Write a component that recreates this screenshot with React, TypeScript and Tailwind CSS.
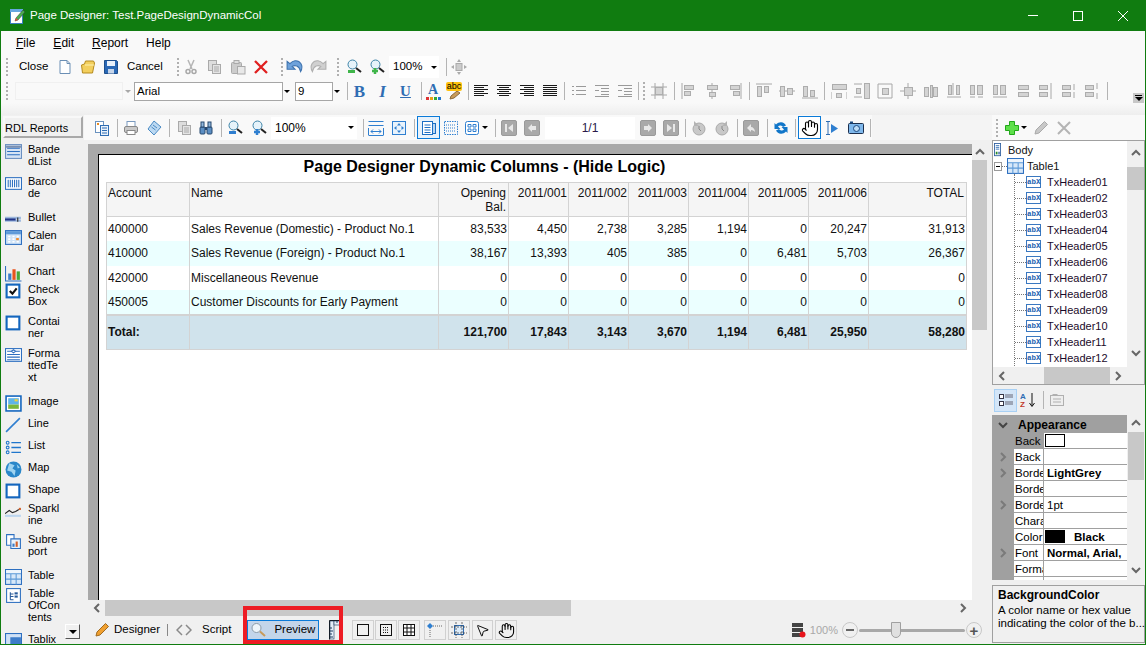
import React from "react";
import { Hand, MousePointer2 } from "lucide-react";

type P = { children?: React.ReactNode; s?: number };
const Ic = ({ children, s = 16 }: P) => (
  <svg width={s} height={s} viewBox="0 0 16 16" className="shrink-0" fill="none">{children}</svg>
);

const Btn = ({ children, w = "w-[23px]", c = "" }: { children?: React.ReactNode; w?: string; c?: string }) => (
  <div className={`${w} h-full shrink-0 flex items-center justify-center ${c}`}>{children}</div>
);
const Sep = ({ c = "" }: { c?: string }) => <div className={`w-px h-[18px] shrink-0 bg-[#b4b4b4] ${c}`} />;
const Grip = ({ c = "" }: { c?: string }) => (
  <div className={`w-[2px] shrink-0 flex flex-col gap-[2px] ${c}`}>
    {[0, 1, 2, 3, 4].map((i) => <div key={i} className="w-[2px] h-[2px] bg-[#b0b0b0]" />)}
  </div>
);
const Arrow = ({ c = "", gray = false }: { c?: string; gray?: boolean }) => (
  <div className={`w-0 h-0 shrink-0 border-x-[3px] border-x-transparent border-t-[3px] ${gray ? "border-t-[#a8a8a8]" : "border-t-black"} ${c}`} />
);

/* grey layout glyphs */
const Gr = ({ r, l = [] }: { r: number[][]; l?: number[][] }) => (
  <Ic>
    {l.map((a, i) => <line key={i} x1={a[0]} y1={a[1]} x2={a[2]} y2={a[3]} stroke="#a8a8a8" />)}
    {r.map((a, i) => <rect key={i} x={a[0] + 0.5} y={a[1] + 0.5} width={a[2]} height={a[3]} fill="#d4d4d4" stroke="#adadad" />)}
  </Ic>
);

const Lines = ({ k }: { k: number[][] }) => (
  <Ic>{k.map((a, i) => <line key={i} x1={a[0]} x2={a[1]} y1={a[2] + 0.5} y2={a[2] + 0.5} stroke={a[3] ? "#9a9a9a" : "#1a1a1a"} />)}</Ic>
);

const Mag = ({ acc, plus }: { acc: string; plus?: boolean }) => (
  <Ic>
    <circle cx="6.5" cy="5.5" r="4.5" fill="#e6f3fa" stroke="#3d83a8" />
    <path d="M10 9l5 4" stroke="#222" strokeWidth="2" />
    {plus ? <path d="M6 9v6M3 12h6" stroke={acc} strokeWidth="2.5" /> : <rect x="2" y="11" width="7" height="3" fill={acc} />}
  </Ic>
);
const Doc = () => (
  <Ic><path d="M3 1.5h7l3 3v10H3z" fill="#fff" stroke="#6b8fb5" /><path d="M10 1.5v3h3" stroke="#6b8fb5" /></Ic>
);
const Folder = () => (
  <Ic><path d="M1.5 6l3-1 1-3h8l1 2-2 10H2.500z" fill="#f3cf5d" stroke="#b58a1e" /><path d="M5 6h9" stroke="#fff2b0" /></Ic>
);
const Save = () => (
  <Ic><path d="M1.500 1.500h12l1 1v12h-13z" fill="#2a68b5" stroke="#1e4f8c" /><rect x="4" y="2" width="8" height="5" fill="#e9f1fa" /><rect x="5" y="10" width="6" height="4.500" fill="#c7d6ea" /></Ic>
);
const Scissors = () => (
  <Ic><path d="M5 1l4 9M11 1l-4 9" stroke="#b5b5b5" strokeWidth="1.500" /><circle cx="5" cy="12.500" r="2" stroke="#a8a8a8" strokeWidth="1.500" /><circle cx="11" cy="12.500" r="2" stroke="#a8a8a8" strokeWidth="1.500" /></Ic>
);
const CopyG = () => (
  <Ic><rect x="2.500" y="1.500" width="8" height="10" fill="#ddd" stroke="#aaa" /><rect x="6.500" y="5.500" width="8" height="9" fill="#e4e4e4" stroke="#aaa" /><path d="M8 8h5M8 10h5M8 12h5" stroke="#aaa" /></Ic>
);
const PasteG = () => (
  <Ic><rect x="1.500" y="3.500" width="10" height="11" rx="1" fill="#ccc" stroke="#aaa" /><rect x="4" y="1.500" width="5" height="3" fill="#ddd" stroke="#aaa" /><rect x="7.500" y="7.500" width="7.500" height="7.500" fill="#e8e8e8" stroke="#aaa" /></Ic>
);
const RedX = () => (
  <Ic><path d="M2 2l12 12M14 2L2 14" stroke="#e02020" strokeWidth="2.300" /></Ic>
);
const Undo = () => (
  <Ic s={18}><path d="M1 3v7h7L5.500 7.500C8 6 11.500 6.500 13 12 16 7 12.500 2 8 2.500 6.500 2.700 5 3.500 3.500 5z" fill="#6ea2db" stroke="#3f74b0" /></Ic>
);
const Redo = () => (
  <Ic s={18}><path d="M15 3v7H8l2.500-2.500C8 6 4.500 6.500 3 12 0 7 3.500 2 8 2.500c1.500.2 3 1 4.500 2.500z" fill="#d0d0d0" stroke="#b0b0b0" /></Ic>
);
const MoveG = () => (
  <Ic><rect x="5" y="4.500" width="6" height="7" fill="#ccc" stroke="#aaa" /><path d="M8 0l2 3H6zM8 16l2-3H6zM0 8l3-2v4zM16 8l-3-2v4z" fill="#aaa" /></Ic>
);
const PrintI = () => (
  <Ic><rect x="4" y="1.500" width="8" height="5" fill="#fff" stroke="#7a9abf" /><rect x="1.500" y="6.500" width="13" height="6" rx="1.500" fill="#c9c9c9" stroke="#888" /><rect x="4" y="10.500" width="8" height="4" fill="#fff" stroke="#888" /></Ic>
);
const Scroll = () => (
  <Ic><path d="M7 1l7 6-7 8-6-6z" fill="#bcd9f2" stroke="#4a8ac4" /><path d="M6 5l4 3M4.500 7l4 3" stroke="#4a8ac4" /></Ic>
);
const DocsI = () => (
  <Ic><rect x="1.500" y="1.500" width="8" height="11" fill="#fff" stroke="#6a92bf" /><rect x="6.500" y="5.500" width="8" height="10" fill="#eaf2fb" stroke="#2f6db3" /><path d="M8 8h5M8 10.500h5M8 13h5" stroke="#2f6db3" /><rect x="3" y="3" width="2" height="2" fill="#e88a20" /></Ic>
);
const Bino = () => (
  <Ic><rect x="2" y="7" width="5" height="7" rx="1" fill="#5c8fc4" stroke="#27486e" /><rect x="9" y="7" width="5" height="7" rx="1" fill="#5c8fc4" stroke="#27486e" /><rect x="3" y="2" width="3" height="5" fill="#8fb6dc" stroke="#27486e" /><rect x="10" y="2" width="3" height="5" fill="#8fb6dc" stroke="#27486e" /><rect x="7" y="7" width="2" height="3" fill="#27486e" /></Ic>
);
const FitW = () => (
  <Ic><path d="M.5 1.500h15M.5 5.500h15M.5 8v7M15.500 8v7" stroke="#2f7fd0" /><path d="M3 11.500h10M3 11.500l2-2M3 11.500l2 2M13 11.500l-2-2M13 11.500l-2 2M.5 15.500h15" stroke="#2f7fd0" /></Ic>
);
const FitP = () => (
  <Ic><rect x="1.500" y="1.500" width="13" height="13" stroke="#2f7fd0" fill="#e9f3fc" /><path d="M8 3l2 2.500H6zM8 13l2-2.500H6zM3 8l2.500-2v4zM13 8l-2.500-2v4z" fill="#2f7fd0" /></Ic>
);
const PageI = () => (
  <Ic><rect x="1.500" y="1.500" width="10" height="13" fill="#fff" stroke="#1d6fc4" /><rect x="11.500" y="3.500" width="3" height="10" fill="#bcd8f2" stroke="#1d6fc4" /><path d="M3.500 5h6M3.500 7.500h6M3.500 10h6M3.500 12.500h6" stroke="#1d6fc4" /></Ic>
);
const PageD = () => (
  <Ic><rect x="1.500" y="1.500" width="13" height="13" strokeDasharray="1.500 1" stroke="#2f7fd0" /><path d="M3 5h10M3 8h10M3 11h10" stroke="#2f7fd0" strokeDasharray="1 1" /></Ic>
);
const Quad = () => (
  <Ic><rect x="1.500" y="1.500" width="13" height="13" rx="2" stroke="#2f7fd0" fill="#fff" /><path d="M4 4.500h3v2.500H4zM9 4.500h3v2.500H9zM4 9h3v2.500H4zM9 9h3v2.500H9z" stroke="#2f7fd0" /></Ic>
);
const Nav = ({ k }: { k: string }) => (
  <div className="w-[16px] h-[16px] rounded-[2px] bg-[#a9a9a9] border border-[#9a9a9a] flex items-center justify-center">
    <svg width="10" height="10" viewBox="0 0 10 10"><path d={k} fill="#e8e8e8" /></svg>
  </div>
);
const Clock = ({ m }: { m?: boolean }) => (
  <Ic><circle cx="8" cy="9" r="6" fill="#c8c8c8" stroke="#aaa" /><path d={m ? "M13 1v5h-5z" : "M3 1v5h5z"} fill="#b4b4b4" /><path d="M8 6v3l2 2" stroke="#888" /></Ic>
);
const Refresh = () => (
  <Ic><path d="M13 5.500A6 6 0 0 0 3 4.500L1.500 3v6h6L5 6.500a3 3 0 0 1 5 .5z" fill="#1176c9" /><path d="M3 10.500A6 6 0 0 0 13 11.500l1.500 1.500V7h-6L11 9.500a3 3 0 0 1-5-.5z" fill="#1176c9" /></Ic>
);
const SelText = () => (
  <Ic><path d="M2 1.500h4M2 14.500h4M4 1.500v13" stroke="#2f6db3" /><path d="M7 4l7 4.500L7 13z" fill="#2f7fd0" /></Ic>
);
const Camera = () => (
  <Ic><rect x=".5" y="3.500" width="15" height="10" rx="1" fill="#7fb8ec" stroke="#1c2f4d" /><circle cx="8.500" cy="8.500" r="3" fill="#bcdcf7" stroke="#1c4a80" /><rect x="2" y="1.500" width="3" height="2" fill="#1c4a80" /></Ic>
);
const Pencil = ({ c = "#c8c8c8", d = "#aaa" }: { c?: string; d?: string }) => (
  <Ic><path d="M11.500 1.500l3 3L6 13l-4 1 1-4z" fill={c} stroke={d} /></Ic>
);
const Plus = () => (
  <Ic s={16}><path d="M5.500 1.500h5v4h4v5h-4v4h-5v-4h-4v-5h4z" fill="#5ee04a" stroke="#22a81a" /></Ic>
);
const GrayX = () => (
  <Ic><path d="M2 2l12 12M14 2L2 14" stroke="#b4b4b4" strokeWidth="2" /></Ic>
);

const Chev = ({ d, c = "#666" }: { d: "u" | "d" | "l" | "r"; c?: string }) => {
  const p = { u: "M2 7l4-4 4 4", d: "M2 4l4 4 4-4", l: "M8 2L4 6l4 4", r: "M4 2l4 4-4 4" }[d];
  return <svg width="12" height="12" viewBox="0 0 12 12" className="shrink-0" fill="none"><path d={p} stroke={c} strokeWidth="2" /></svg>;
};

/* palette icons */
const PB = "#2d6fc0";
const pal: Record<string, React.ReactNode> = {
  bl: <Ic s={17}><rect x=".5" y="1.500" width="15" height="13" fill="#d5e3f4" stroke="#6a8fc0" /><path d="M2 5h12M2 8h12M2 11h12" stroke={PB} /><path d="M1 3.500h14" stroke="#7a8fb0" strokeWidth="2" /></Ic>,
  bc: <Ic s={17}><rect x=".5" y="2.500" width="15" height="11" fill="#fff" stroke={PB} /><path d="M3 4.500v7M5 4.500v7M7 4.500v7M9 4.500v7M11 4.500v7M13 4.500v7" stroke={PB} /></Ic>,
  bu: <Ic s={17}><path d="M0 6.500h15M0 9h15" stroke="#9db8dd" strokeWidth="2" /><path d="M0 8h10" stroke="#23368a" strokeWidth="2" /><path d="M12 6v4" stroke="#222" /></Ic>,
  ca: <Ic s={17}><rect x=".5" y="1.500" width="15" height="13" fill="#cfe3f7" stroke={PB} /><rect x="1" y="2" width="14" height="3" fill="#5e9ad8" /><path d="M3 7h2M7 7h2M11 7h2M3 9.500h2M7 9.500h2M3 12h2M7 12h2M11 12h2" stroke="#fff" strokeWidth="1.500" /><rect x="10.500" y="8.500" width="2.500" height="2" fill="#ef8b2c" /></Ic>,
  ch: <Ic s={17}><path d="M.5 1v14h15" stroke={PB} /><rect x="3" y="8" width="3" height="6" fill="#3c7cc8" /><rect x="7" y="4" width="3" height="10" fill="#e8541e" /><rect x="11" y="6" width="3" height="8" fill="#47a83c" /></Ic>,
  ck: <Ic s={17}><rect x="1.500" y="1.500" width="12" height="12" fill="#fff" stroke="#1466be" strokeWidth="2" /><path d="M4.500 7.500l2.500 2.500 4-5" stroke="#111" strokeWidth="2" /></Ic>,
  co: <Ic s={17}><rect x="1.500" y="1.500" width="12" height="12" fill="#fff" stroke="#1466be" strokeWidth="2" /></Ic>,
  ft: <Ic s={17}><rect x=".5" y="1.500" width="15" height="12" fill="#fff" stroke={PB} /><path d="M2 4h4M10 4h4M2 7h12M2 9.500h12M2 12h12" stroke={PB} /><path d="M6 4l2-1.500L10 4 8 5.500z" stroke={PB} /></Ic>,
  im: <Ic s={17}><rect x="1" y="1" width="14" height="14" fill="#fff" stroke="#1466be" strokeWidth="1.500" /><rect x="3" y="3" width="10" height="6" fill="#5fb4e8" /><rect x="3" y="9" width="10" height="4" fill="#7bb63a" /><rect x="9" y="4" width="3" height="2" fill="#f2d23a" /></Ic>,
  li: <Ic s={17}><path d="M1 14L14 1" stroke="#2f7fd0" strokeWidth="1.500" /></Ic>,
  ls: <Ic s={17}><path d="M6 3.500h9M6 8h9M6 12.500h9" stroke="#1f76cc" strokeWidth="1.200" /><circle cx="2.500" cy="3.500" r="1.300" stroke="#1f76cc" /><circle cx="2.500" cy="8" r="1.300" stroke="#1f76cc" /><circle cx="2.500" cy="12.500" r="1.300" stroke="#1f76cc" /></Ic>,
  ma: <Ic s={17}><circle cx="8" cy="8" r="7.500" fill="#2a87c9" /><path d="M4 2l5 2-2 3 3 2-1 5-3-4-4-1zM11 3l3 3-2 1z" fill="#9ed3f0" /></Ic>,
  sh: <Ic s={17}><rect x="1.500" y="1.500" width="12" height="12" fill="#fff" stroke="#1466be" strokeWidth="2" /></Ic>,
  sp: <Ic s={17}><path d="M0 13h15" stroke="#bcd6ef" strokeWidth="2" /><path d="M0 11l4-3 3 2 3-1 3-2" stroke="#222" /><rect x="13" y="5.500" width="2" height="2" fill="#d2602a" /></Ic>,
  su: <Ic s={17}><path d="M1.500 1.500h7v10h-7z" fill="#fff" stroke={PB} /><path d="M5.500 5.500h9v9h-9z" fill="#e9f2fb" stroke={PB} /><rect x="7" y="10" width="2" height="3" fill="#3c7cc8" /><rect x="10" y="8" width="2" height="5" fill="#d2602a" /></Ic>,
  ta: <Ic s={17}><rect x=".5" y=".5" width="15" height="14" fill="#d7e8f9" stroke={PB} /><rect x="1" y="1" width="14" height="3" fill="#eef5fc" /><path d="M1 4.500h14M1 9.500h14M5.500 4.500v10M10.500 4.500v10" stroke="#5e9ad8" /></Ic>,
  to: <Ic s={17}><rect x="1.500" y="1.500" width="13" height="13" fill="#fff" stroke={PB} /><path d="M5 5v7M5 6.500h3M5 9h3M5 12h3" stroke="#2a5b9a" /><rect x="9" y="5" width="3" height="2" fill="#2a5b9a" /><rect x="9" y="8" width="3" height="2" fill="#2a5b9a" /></Ic>,
  tx: <Ic s={17}><rect x=".5" y=".5" width="15" height="15" fill="#cfe1f6" stroke={PB} /><rect x="5" y="4" width="10" height="10" fill="#3d7cc9" /></Ic>,
};
const palette: { i: string; t: React.ReactNode; h: string }[] = [
  { i: "bl", t: <>Bande<br />dList</>, h: "h-[32px]" },
  { i: "bc", t: <>Barco<br />de</>, h: "h-[36px]" },
  { i: "bu", t: "Bullet", h: "h-[18px]" },
  { i: "ca", t: <>Calen<br />dar</>, h: "h-[36px]" },
  { i: "ch", t: "Chart", h: "h-[18px]" },
  { i: "ck", t: <>Check<br />Box</>, h: "h-[32px]" },
  { i: "co", t: <>Contai<br />ner</>, h: "h-[32px]" },
  { i: "ft", t: <>Forma<br />ttedTe<br />xt</>, h: "h-[48px]" },
  { i: "im", t: "Image", h: "h-[22px]" },
  { i: "li", t: "Line", h: "h-[22px]" },
  { i: "ls", t: "List", h: "h-[22px]" },
  { i: "ma", t: "Map", h: "h-[22px]" },
  { i: "sh", t: "Shape", h: "h-[19px]" },
  { i: "sp", t: <>Sparkl<br />ine</>, h: "h-[31px]" },
  { i: "su", t: <>Subre<br />port</>, h: "h-[36px]" },
  { i: "ta", t: "Table", h: "h-[18px]" },
  { i: "to", t: <>Table<br />OfCon<br />tents</>, h: "h-[46px]" },
  { i: "tx", t: "Tablix", h: "h-[20px]" },
];

const Palette = () => (
  <div className="relative w-[83px] shrink-0 flex flex-col pt-px pl-px overflow-hidden">
    <div className="w-[80px] h-[22px] border-2 border-t-[#f8f8f8] border-l-[#f8f8f8] border-r-[#a9a9a9] border-b-[#a9a9a9] bg-[#f0f0f0] text-[11px] leading-[20px] ml-px text-black">RDL Reports</div>
    <div className="mt-[5px] flex flex-col">
      {palette.map((p, i) => (
        <div key={i} className={`${p.h} shrink-0 flex pl-[3px] gap-[6px] text-[11px] leading-[12px] text-black`}>
          <div className="w-[17px] shrink-0">{pal[p.i]}</div>
          <div className="whitespace-nowrap">{p.t}</div>
        </div>
      ))}
    </div>
    <div className="absolute left-[64px] top-[509px] w-[15px] h-[15px] bg-[#f0f0f0] border border-t-[#fff] border-l-[#fff] border-r-[#555] border-b-[#555] flex items-center justify-center">
      <div className="w-0 h-0 border-x-[4px] border-x-transparent border-t-[4px] border-t-black" />
    </div>
  </div>
);

const Combo = ({ c, t }: { c: string; t: string }) => (
  <div className={`${c} h-[19px] shrink-0 bg-white border border-[#a6a6a6] text-[11.500px] leading-[17px] pl-[2px] text-black`}>{t}</div>
);

const Menu = () => (
  <div className="h-[24px] shrink-0 bg-[#f9f9f9] flex items-center text-[12px] text-black pl-[15px] gap-[18px]">
    <span><u>F</u>ile</span>
    <span><u>E</u>dit</span>
    <span><u>R</u>eport</span>
    <span>Help</span>
  </div>
);

const Row1 = () => (
  <div className="h-[24px] shrink-0 bg-[#f9f9f9] flex items-center text-[11.500px] text-black">
    <Grip c="ml-[5px]" />
    <div className="w-[45px] pl-[11px] shrink-0">Close</div>
    <Btn><Doc /></Btn>
    <Btn><Folder /></Btn>
    <Btn><Save /></Btn>
    <div className="w-[48px] pl-[5px] shrink-0">Cancel</div>
    <Grip c="ml-[7px]" />
    <Btn w="w-[23.500px]"><Scissors /></Btn>
    <Btn w="w-[23.500px]"><CopyG /></Btn>
    <Btn w="w-[23.500px]"><PasteG /></Btn>
    <Btn w="w-[23.500px]"><RedX /></Btn>
    <Grip c="ml-[8px]" />
    <Btn><Undo /></Btn>
    <Btn><Redo /></Btn>
    <Grip c="ml-[8px]" />
    <Btn c="ml-[3px]"><Mag acc="#3fb54a" /></Btn>
    <Btn><Mag acc="#3fb54a" plus /></Btn>
    <div className="w-[50px] h-[22px] shrink-0 bg-[#fff] flex items-center justify-between pl-[4px] pr-[2px] ml-px"><span>100%</span><Arrow /></div>
    <Sep c="ml-[7px]" />
    <Btn><MoveG /></Btn>
  </div>
);

const Row2 = () => (
  <div className="h-[24px] shrink-0 bg-[#f9f9f9] flex items-center text-[12px] text-black">
    <Grip c="ml-[5px]" />
    <div className="w-[108px] h-[18px] ml-[7px] shrink-0 border border-[#f0f0f0]" />
    <Arrow gray c="ml-[2px]" />
    <Combo c="w-[149px] ml-[3px]" t="Arial" />
    <Arrow c="ml-[1px]" />
    <Combo c="w-[38px] ml-[5px]" t="9" />
    <Arrow c="ml-[1px]" />
    <Sep c="ml-[7px]" />
    <Btn><span className="text-[#2f6db3] font-bold text-[17px] leading-none [font-family:'Liberation_Serif',serif]">B</span></Btn>
    <Btn><span className="text-[#2f6db3] font-bold italic text-[17px] leading-none [font-family:'Liberation_Serif',serif]">I</span></Btn>
    <Btn><span className="text-[#2f6db3] font-bold underline text-[15px] leading-none [font-family:'Liberation_Serif',serif]">U</span></Btn>
    <Sep c="ml-[4px]" />
    <Btn w="w-[22px]">
      <div className="flex flex-col items-center">
        <span className="text-[#2f6db3] font-bold text-[14px] leading-[13px] [font-family:'Liberation_Serif',serif]">A</span>
        <div className="flex gap-px mt-px"><i className="w-[3px] h-[3px] bg-[#d33]" /><i className="w-[3px] h-[3px] bg-[#e8a317]" /><i className="w-[3px] h-[3px] bg-[#3a3]" /><i className="w-[3px] h-[3px] bg-[#27c]" /></div>
      </div>
    </Btn>
    <Btn w="w-[20px]">
      <div className="relative w-[16px] h-[18px]">
        <div className="h-[9px] bg-[#ffc20e] rounded-[2px] text-[9px] leading-[8px] text-black text-center">abc</div>
        <svg width="12" height="9" viewBox="0 0 12 9" className="absolute left-[3px] top-[9px]"><path d="M1 8l1-3 6-5 3 2-6 5z" fill="#c89a5a" stroke="#8a6a3a" /></svg>
      </div>
    </Btn>
    <Sep c="ml-[4px]" />
    <Btn><Lines k={[[1, 15, 2], [1, 11, 4], [1, 15, 6], [1, 11, 8], [1, 15, 10], [1, 11, 12]]} /></Btn>
    <Btn><Lines k={[[1, 15, 2], [3, 13, 4], [1, 15, 6], [3, 13, 8], [1, 15, 10], [3, 13, 12]]} /></Btn>
    <Btn><Lines k={[[1, 15, 2], [5, 15, 4], [1, 15, 6], [5, 15, 8], [1, 15, 10], [5, 15, 12]]} /></Btn>
    <Btn><Lines k={[[1, 15, 2], [1, 15, 4], [1, 15, 6], [1, 15, 8], [1, 15, 10], [1, 15, 12]]} /></Btn>
    <Sep c="ml-[3px]" />
    <Btn c="ml-[2px]"><Lines k={[[1, 3, 3, 1], [5, 15, 3, 1], [1, 3, 7, 1], [5, 15, 7, 1], [1, 3, 11, 1], [5, 15, 11, 1]]} /></Btn>
    <Btn><Lines k={[[1, 15, 2, 1], [7, 15, 5, 1], [1, 5, 7, 1], [7, 15, 8, 1], [7, 15, 11, 1], [1, 15, 13, 1]]} /></Btn>
    <Btn><Lines k={[[1, 15, 2, 1], [7, 15, 5, 1], [1, 5, 7, 1], [7, 15, 8, 1], [7, 15, 11, 1], [1, 15, 13, 1]]} /></Btn>
    <Sep c="ml-[2px]" />
    <Grip c="ml-[4px]" />
    <Btn c="ml-[2px]"><Gr r={[[4, 4, 7, 7]]} l={[[4, 0, 4, 16], [12, 0, 12, 16], [0, 4, 16, 4], [0, 12, 16, 12]]} /></Btn>
    <Sep c="ml-[4px]" />
    <Btn c="ml-[2px]"><Gr r={[[3, 2, 9, 4], [3, 8, 6, 4]]} l={[[1, 0, 1, 16]]} /></Btn>
    <Btn><Gr r={[[3, 2, 10, 4], [5, 9, 6, 4]]} l={[[8, 0, 8, 16]]} /></Btn>
    <Btn><Gr r={[[3, 2, 9, 4], [6, 8, 6, 4]]} l={[[14, 0, 14, 16]]} /></Btn>
    <Sep c="ml-[3px]" />
    <Btn c="ml-[2px]"><Gr r={[[1, 3, 4, 10], [8, 3, 4, 6]]} l={[[0, 1, 16, 1]]} /></Btn>
    <Btn><Gr r={[[1, 3, 4, 10], [8, 5, 5, 6]]} l={[[0, 8, 16, 8]]} /></Btn>
    <Btn><Gr r={[[1, 3, 4, 10], [8, 7, 4, 6]]} l={[[0, 15, 16, 15]]} /></Btn>
    <Sep c="ml-[3px]" />
    <Btn c="ml-[2px]"><Gr r={[[1, 1, 14, 5], [5, 10, 5, 4]]} l={[[0, 9, 0, 16], [16, 9, 16, 16]]} /></Btn>
    <Btn><Gr r={[[10, 0, 5, 15], [2, 5, 4, 5]]} l={[[0, 1, 8, 1], [0, 14, 8, 14]]} /></Btn>
    <Btn><Gr r={[[5, 5, 6, 6]]} l={[[1, 1, 15, 1], [1, 15, 15, 15], [1, 1, 1, 15], [15, 1, 15, 15]]} /></Btn>
    <Btn><Gr r={[[4, 4, 8, 8]]} l={[[8, 0, 8, 16], [0, 8, 16, 8]]} /></Btn>
    <Btn><Gr r={[[1, 4, 4, 9], [7, 2, 2, 12], [10, 4, 4, 9]]} /></Btn>
    <Btn><Gr r={[[2, 2, 3, 9], [10, 2, 3, 9]]} l={[[7, 0, 7, 12], [1, 14, 15, 14]]} /></Btn>
    <Btn><Gr r={[[1, 2, 4, 9], [8, 2, 5, 9]]} l={[[1, 14, 6, 14], [9, 14, 14, 14]]} /></Btn>
    <Btn><Gr r={[[1, 2, 4, 9], [8, 2, 5, 9]]} l={[[1, 14, 15, 14]]} /></Btn>
    <Btn><Gr r={[[3, 2, 10, 4], [3, 9, 10, 4]]} /></Btn>
    <Btn><Gr r={[[1, 2, 8, 4], [1, 9, 8, 4]]} l={[[13, 0, 13, 16]]} /></Btn>
    <Btn><Gr r={[[1, 2, 8, 4], [1, 9, 8, 4]]} l={[[13, 1, 13, 7], [13, 9, 13, 15]]} /></Btn>
    <Btn><Gr r={[[1, 2, 8, 4], [1, 9, 8, 4]]} l={[[13, 0, 13, 6], [13, 10, 13, 16]]} /></Btn>
    <Sep c="ml-[4px]" />
    <div className="ml-[25px] w-[11px] h-[11px] mt-[14px] bg-[#c8c8c8] flex flex-col items-center justify-center gap-px">
      <div className="w-[7px] h-px bg-black" />
      <div className="w-0 h-0 border-x-[4px] border-x-transparent border-t-[4px] border-t-black" />
    </div>
  </div>
);

const CenterBar = () => (
  <div className="h-[25px] shrink-0 bg-[#f9f9f9] flex items-center text-[12px] text-black pl-[6px]">
    <Btn><DocsI /></Btn>
    <Sep c="ml-[4px]" />
    <Btn w="w-[26px]"><PrintI /></Btn>
    <Btn w="w-[21px]"><Scroll /></Btn>
    <Sep c="ml-[4px]" />
    <Btn w="w-[27px]"><CopyG /></Btn>
    <Btn w="w-[18px]"><Bino /></Btn>
    <Sep c="ml-[6px]" />
    <Btn w="w-[26px]"><Mag acc="#2f7fd0" /></Btn>
    <Btn w="w-[21px]"><Mag acc="#2f7fd0" plus /></Btn>
    <div className="w-[86px] h-[22px] ml-[2px] shrink-0 bg-[#fff] flex items-center justify-between pl-[4px] pr-[3px]"><span>100%</span><Arrow /></div>
    <Sep c="ml-[6px]" />
    <Btn><FitW /></Btn>
    <Btn><FitP /></Btn>
    <Sep c="ml-[4px]" />
    <div className="w-[23px] h-[23px] ml-[2px] shrink-0 border border-[#0a7ad8] bg-[#e8f2fb] flex items-center justify-center"><PageI /></div>
    <Btn w="w-[22px]"><PageD /></Btn>
    <Btn w="w-[20px]"><Quad /></Btn>
    <Arrow />
    <Sep c="ml-[7px]" />
    <Btn w="w-[26px]"><Nav k="M1 1h2v8H1zM9 1v8L4 5z" /></Btn>
    <Btn w="w-[20px]"><Nav k="M9 3v4H5v2L1 5l4-4v2z" /></Btn>
    <div className="w-[90px] h-[22px] ml-[3px] shrink-0 bg-white text-[#2a1a4a] text-center leading-[22px]">1/1</div>
    <Btn w="w-[25px]"><Nav k="M1 3v4h4v2l4-4-4-4v2z" /></Btn>
    <Btn w="w-[21px]"><Nav k="M1 1v8l5-4zM7 1h2v8H7z" /></Btn>
    <Sep c="ml-[4px]" />
    <Btn w="w-[25px]"><Clock /></Btn>
    <Btn w="w-[21px]"><Clock m /></Btn>
    <Sep c="ml-[5px]" />
    <Btn w="w-[26px]"><Nav k="M5 1L1 5l4 4V7c2 0 3 1 4 2 0-3-2-5-4-5z" /></Btn>
    <Sep c="ml-[3px]" />
    <Btn w="w-[26px]"><Refresh /></Btn>
    <Sep c="ml-px" />
    <div className="w-[23px] h-[23px] ml-[2px] shrink-0 border border-[#0a7ad8] bg-white flex items-center justify-center"><Hand size={18} strokeWidth={1.5} color="#000" /></div>
    <Btn w="w-[22px]"><SelText /></Btn>
    <Btn w="w-[26px]"><Camera /></Btn>
    <Sep c="ml-px" />
    <div className="flex-1 h-full bg-[#f4f4f4] ml-[1px]" />
  </div>
);

const cols = ["w-[83px]", "w-[249px]", "w-[70px]", "w-[60px]", "w-[60px]", "w-[60px]", "w-[60px]", "w-[60px]", "w-[60px]", "w-[98px]"];
const head = ["Account", "Name", "Opening Bal.", "2011/001", "2011/002", "2011/003", "2011/004", "2011/005", "2011/006", "TOTAL"];
const rows = [
  { h: "h-[24px]", b: "bg-white", v: ["400000", "Sales Revenue (Domestic) - Product No.1", "83,533", "4,450", "2,738", "3,285", "1,194", "0", "20,247", "31,913"] },
  { h: "h-[25px]", b: "bg-[#ebffff]", v: ["410000", "Sales Revenue (Foreign) - Product No.1", "38,167", "13,393", "405", "385", "0", "6,481", "5,703", "26,367"] },
  { h: "h-[24px]", b: "bg-white", v: ["420000", "Miscellaneous Revenue", "0", "0", "0", "0", "0", "0", "0", "0"] },
  { h: "h-[25px]", b: "bg-[#ebffff]", v: ["450005", "Customer Discounts for Early Payment", "0", "0", "0", "0", "0", "0", "0", "0"] },
];
const totals = ["Total:", "", "121,700", "17,843", "3,143", "3,670", "1,194", "6,481", "25,950", "58,280"];

const Report = () => (
  <div className="[font-family:'Liberation_Sans',Arial,sans-serif] text-[12px] text-[#111]">
    <div className="w-[771px] h-[27px] text-center text-[16px] font-bold leading-[24px] text-black">Page Designer Dynamic Columns - (Hide Logic)</div>
    <table className="ml-[7px] w-[861px] table-fixed border-collapse">
      <colgroup>{cols.map((c, i) => <col key={i} className={c} />)}</colgroup>
      <thead>
        <tr className="h-[34px] bg-[#f5f5f5]">
          {head.map((t, i) => (
            <th key={i} className={`border border-[#d3d3d3] align-top font-normal pl-[1px] pt-[3px] leading-[14px] ${i < 2 ? "text-left" : "text-right"} ${i === 2 ? "pl-[10px] pr-[2px]" : i === 9 ? "pr-[2px]" : "pr-[1px]"}`}>{t}</th>
          ))}
        </tr>
      </thead>
      <tbody>
        {rows.map((r, ri) => (
          <tr key={ri} className={`${r.h} ${r.b}`}>
            {r.v.map((t, i) => (
              <td key={i} className={`border-x border-[#d3d3d3] pl-[1px] pr-[1px] ${i < 2 ? "text-left" : "text-right"} whitespace-nowrap`}>{t}</td>
            ))}
          </tr>
        ))}
        <tr className="h-[35px] bg-[#d0e3ec]">
          {totals.map((t, i) => (
            <td key={i} className={`border border-t-2 border-[#d3d3d3] pl-[1px] pr-[1px] font-bold ${i < 2 ? "text-left" : "text-right"}`}>{t}</td>
          ))}
        </tr>
      </tbody>
    </table>
  </div>
);

const Ruler = () => (
  <svg width="14" height="20" viewBox="0 0 14 20" className="ml-[10px] shrink-0" fill="none">
    <path d="M.5 19.500V.5h13" stroke="#111" />
    <rect x="1" y="1" width="4" height="18" fill="#e4eef8" stroke="#1c3a5c" strokeWidth=".6" />
    <rect x="5" y="1" width="8" height="4" fill="#e4eef8" stroke="#1c3a5c" strokeWidth=".6" />
    <path d="M1 8h2M1 11h3M1 14h2M1 17h3M8 1v2M11 1v3" stroke="#1c3a5c" />
  </svg>
);

const Bottom = () => (
  <div className="relative h-[28px] shrink-0 flex items-center text-[11.500px] text-black">
    <div className="w-[18px] ml-[10px] shrink-0"><Pencil c="#f0a030" d="#a06a20" /></div>
    <span className="ml-[2px]">Designer</span>
    <div className="w-px h-[12px] bg-[#888] ml-[7px]" />
    <svg width="16" height="12" viewBox="0 0 16 12" className="ml-[8px] shrink-0" fill="none"><path d="M6 1L1 6l5 5M10 1l5 5-5 5" stroke="#8a8a8a" strokeWidth="1.500" /></svg>
    <span className="ml-[10px]">Script</span>
    <div className="w-[72px] h-[20px] ml-[16px] shrink-0 bg-[#c3d5ea] border border-[#0a7ad8] flex items-center pl-[2px] gap-[8px] mb-[1px]">
      <Ic><circle cx="6.500" cy="6" r="4.500" fill="#eef5fa" stroke="#8a9aa8" /><path d="M10 9.500l5 4.500" stroke="#c89a5a" strokeWidth="2" /></Ic>
      <span>Preview</span>
    </div>
    <Ruler />
    <div className="ml-[9px] flex items-center h-[20px]">
      {[
        <rect key="a" x="2.500" y="2.500" width="11" height="11" stroke="#111" />,
        <g key="b"><rect x="2.500" y="2.500" width="11" height="11" stroke="#111" /><path d="M5 5.500h6M5 8h6M5 10.500h6" stroke="#111" strokeDasharray="1 1" /></g>,
        <g key="c"><rect x="2.500" y="2.500" width="11" height="11" fill="#fff" stroke="#111" /><path d="M2.500 6h11M2.500 10h11M6 2.500v11M10 2.500v11" stroke="#111" /></g>,
      ].map((n) => (
        <div key={n.key} className="w-[22px] h-[20px] mr-px shrink-0 border border-[#d0d0d0] flex items-center justify-center"><Ic>{n}</Ic></div>
      ))}
      <div className="w-[22px] h-[20px] ml-[3px] mr-[2px] shrink-0 border border-[#d0d0d0] flex items-center justify-center">
        <Ic><path d="M3 1l3 3-3 3-3-3z" fill="#2f7fd0" /><path d="M6 4h10M3 8v8" stroke="#666" strokeDasharray="1 1" /></Ic>
      </div>
      <div className="w-[22px] h-[20px] mr-[2px] shrink-0 border border-[#d0d0d0] flex items-center justify-center">
        <Ic><rect x="3.500" y="3.500" width="9" height="9" fill="#dcecfa" stroke="#2f6db3" /><path d="M5 0v16M11 0v16M0 5h16M0 11h16" stroke="#333" strokeDasharray="2 1" strokeWidth=".7" /></Ic>
      </div>
      <div className="w-[21px] h-[20px] mr-[2px] shrink-0 border border-[#d0d0d0] flex items-center justify-center"><MousePointer2 size={15} strokeWidth={1.5} color="#000" /></div>
      <div className="w-[22px] h-[20px] shrink-0 border border-[#d0d0d0] flex items-center justify-center"><Hand size={17} strokeWidth={1.5} color="#000" /></div>
    </div>
    <div className="ml-auto flex items-center mr-[10px]">
      <svg width="14" height="16" viewBox="0 0 14 16" className="shrink-0"><rect y="1" width="11" height="4" fill="#444" /><rect y="6" width="11" height="4" fill="#444" /><rect y="11" width="11" height="4" fill="#444" /><circle cx="10.500" cy="12.500" r="3" fill="#e8141c" /></svg>
      <span className="ml-[4px] text-[11px] text-[#a8a8a8]">100%</span>
      <div className="ml-[4px] w-[16px] h-[16px] rounded-full border border-[#c8c8c8] flex items-center justify-center"><i className="w-[8px] h-[2px] bg-[#666]" /></div>
      <div className="relative w-[106px] h-[16px] mx-[1px] flex items-center">
        <div className="w-full h-[3px] bg-[#a8a8a8] rounded-full" />
        <div className="absolute left-[32px] top-0 w-[10px] h-[16px] bg-[#e0e0e0] border border-[#a0a0a0] rounded-b-[5px]" />
      </div>
      <div className="w-[16px] h-[16px] rounded-full border border-[#c8c8c8] flex items-center justify-center text-[#555] text-[15px] leading-none font-bold">+</div>
    </div>
  </div>
);

const Center = () => (
  <div className="flex-1 min-w-0 flex flex-col">
    <CenterBar />
    <div className="h-[4px] shrink-0" />
    <div className="flex-1 min-h-0 ml-[4px] mr-[5px] flex flex-col">
      <div className="flex-1 min-h-0 flex">
        <div className="flex-1 min-w-0 bg-[#a9a9a9] pl-[10px] pt-[10px] flex">
          <div className="flex-1 bg-white border-t border-l border-black overflow-hidden"><Report /></div>
        </div>
        <div className="w-[15px] shrink-0 flex flex-col items-center pt-[3px]">
          <Chev d="u" />
          <div className="w-[15px] h-[170px] bg-[#c8c8c8] mt-px" />
        </div>
      </div>
      <div className="h-[16px] shrink-0 flex items-center">
        <div className="w-[17px] flex justify-center"><Chev d="l" /></div>
        <div className="w-[466px] h-full bg-[#c8c8c8]" />
        <div className="ml-auto mr-[18px]"><Chev d="r" /></div>
      </div>
    </div>
    <Bottom />
  </div>
);

const tx = Array.from({ length: 12 }, (_, i) => `TxHeader${String(i + 1).padStart(2, "0")}`);
const Tree = () => (
  <div className="relative h-[245px] shrink-0 border border-[#a0a0a0] bg-white overflow-hidden flex">
    <div className="flex-1 min-w-0 pt-px text-[11px] leading-[16px] text-[#111] relative">
      <div className="h-[16px] flex items-center pl-px">
        <Ic s={14}><rect x=".5" y=".5" width="7" height="14" fill="#fff" stroke="#2f5f9f" /><path d="M2 3h4M2 5h4M2 7h4" stroke="#2f6db3" /><rect x="2" y="10" width="2" height="3" fill="#2a8a2a" /><rect x="5" y="10" width="1.500" height="3" fill="#2a5a9a" /></Ic>
        <span>Body</span>
      </div>
      <div className="h-[16px] flex items-center pl-px">
        <div className="w-[8px] h-[9px] border border-[#9a9a9a] flex items-center justify-center shrink-0"><i className="w-[4px] h-px bg-black" /></div>
        <div className="w-[5px] border-t border-dotted border-[#777] shrink-0" />
        <div className="mr-[3px]">{pal.ta}</div>
        <span>Table1</span>
      </div>
      <div className="ml-[21px] border-l border-dotted border-[#777]">
        {tx.map((t) => (
          <div key={t} className="h-[16px] flex items-center">
            <div className="w-[11px] border-t border-dotted border-[#777] shrink-0" />
            <div className="w-[15px] h-[12px] border border-[#3a78c0] text-[#1c62b0] text-[7.500px] leading-[10px] text-center font-bold shrink-0 [font-family:'Liberation_Mono',monospace]">abX</div>
            <span className="ml-[6px] text-[#1a0a2a]">{t}</span>
          </div>
        ))}
      </div>
      <div className="absolute left-0 right-0 bottom-0 h-[17px] bg-[#f0f0f0] flex items-center z-10">
        <div className="w-[17px] flex justify-center"><Chev d="l" /></div>
        <div className="ml-[34px] w-[66px] h-full bg-[#c8c8c8]" />
        <div className="ml-auto mr-[3px]"><Chev d="r" /></div>
      </div>
    </div>
    <div className="w-[17px] shrink-0 bg-[#f0f0f0] flex flex-col items-center">
      <div className="h-[26px] flex items-center"><Chev d="u" /></div>
      <div className="w-full h-[23px] bg-[#c8c8c8]" />
      <div className="mt-[157px]"><Chev d="d" /></div>
    </div>
  </div>
);

const props: { n: string; v?: React.ReactNode; e?: boolean }[] = [
  { n: "Back", v: <div className="w-[20px] h-[13px] bg-white border border-black ml-px" /> },
  { n: "Back", e: true },
  { n: "Borde", e: true, v: <b className="pl-[3px]">LightGrey</b> },
  { n: "Borde" },
  { n: "Borde", e: true, v: <span className="pl-[3px]">1pt</span> },
  { n: "Chara" },
  { n: "Color", v: <div className="flex items-center"><div className="w-[20px] h-[13px] bg-black ml-px" /><b className="ml-[9px]">Black</b></div> },
  { n: "Font", e: true, v: <b className="pl-[3px] whitespace-nowrap">Normal, Arial,</b> },
  { n: "Forma" },
  { n: "" },
];

const PropsGrid = () => (
  <div className="relative h-[165px] shrink-0 flex overflow-hidden">
    <div className="flex-1 min-w-0 bg-[#a0a0a0] text-[11.500px] text-black">
      <div className="h-[18px] flex items-center pt-[2px]">
        <div className="w-[22px] flex justify-center"><Chev d="d" c="#444" /></div>
        <b className="ml-[4px] text-[12px]">Appearance</b>
      </div>
      {props.map((p, i) => (
        <div key={i} className="h-[16px] flex">
          <div className="w-[22px] shrink-0 flex items-center justify-center">{p.e && <Chev d="r" c="#7a7a7a" />}</div>
          <div className={`w-[29px] shrink-0 h-[15px] overflow-hidden leading-[16px] pl-px whitespace-nowrap ${i === 0 ? "bg-[#a0a0a0]" : "bg-white"}`}>{p.n}</div>
          <div className="ml-px flex-1 h-[15px] bg-white overflow-hidden leading-[16px] flex items-center">{p.v}</div>
        </div>
      ))}
    </div>
    <div className="w-[18px] shrink-0 bg-[#f0f0f0] flex flex-col items-center">
      <div className="h-[17px] flex items-center"><Chev d="u" /></div>
      <div className="w-[16px] h-[48px] bg-[#c8c8c8]" />
      <div className="mt-[84px]"><Chev d="d" /></div>
    </div>
  </div>
);

const Right = () => (
  <div className="w-[153px] shrink-0 flex flex-col">
    <div className="h-[25px] shrink-0 bg-[#f9f9f9] flex items-center">
      <Grip c="ml-[4px]" />
      <Btn w="w-[24px]" c="ml-[2px]"><Plus /></Btn>
      <Arrow c="ml-[-3px]" />
      <Btn w="w-[28px]"><Pencil /></Btn>
      <Btn w="w-[18px]"><GrayX /></Btn>
    </div>
    <Tree />
    <div className="h-[30px] shrink-0 flex items-center pl-[2px]">
      <div className="w-[23px] h-[23px] border border-[#a8d0f4] bg-[#d4e6f8] flex items-center justify-center">
        <Ic><rect x="1.500" y="2.500" width="4" height="4" fill="#fff" stroke="#334" /><rect x="1.500" y="9.500" width="4" height="4" fill="#fff" stroke="#334" /><path d="M7 3h8M7 5h8M7 10h8M7 12h8" stroke="#667" /></Ic>
      </div>
      <div className="ml-[3px] w-[18px] flex items-center justify-center">
        <svg width="18" height="18" viewBox="0 0 18 18" fill="none"><text x="0" y="8" fontSize="8" fontWeight="700" fill="#2f6db3" fontFamily="Liberation Sans">A</text><text x="0" y="16" fontSize="8" fontWeight="700" fill="#c0392b" fontFamily="Liberation Sans">Z</text><path d="M12 2v13M9.500 12l2.500 3.500 2.500-3.500" stroke="#111" /></svg>
      </div>
      <Sep c="ml-[5px]" />
      <div className="ml-[5px]">
        <Ic><rect x="1.500" y="3.500" width="13" height="10" fill="#eee" stroke="#b0b0b0" /><path d="M3.500 2.500h5M4 7h8M4 10h8" stroke="#b0b0b0" /></Ic>
      </div>
    </div>
    <PropsGrid />
    <div className="h-[58px] mt-[5px] shrink-0 border border-[#a0a0a0] bg-[#f0f0f0] px-[5px] pt-[3px] text-[12px] leading-[13px] text-black">
      <b>BackgroundColor</b>
      <div className="mt-[2px] text-[11.500px] whitespace-nowrap">A color name or hex value<br />indicating the color of the b...</div>
    </div>
  </div>
);

export default function App() {
  return (
    <div className="relative w-[1146px] h-[645px] overflow-hidden flex flex-col bg-[#f0f0f0] border-x border-b border-[#107c10] [font-family:'Liberation_Sans',Arial,sans-serif]">
      <div className="h-[31px] shrink-0 bg-[#107c10] flex items-center text-white text-[11.500px] pl-[9px] -mx-px">
        <Ic><rect x="1.500" y="2.500" width="12" height="13" fill="#fff" stroke="#3a7fc0" /><rect x="1" y="1" width="13" height="3" fill="#66a8e0" /><path d="M14 2L7 10l-1 3 3-1 7-8z" fill="#4cae50" stroke="#333" strokeWidth=".5" /><path d="M7 10l-1 3 3-1z" fill="#e84a3a" /></Ic>
        <span className="ml-[5px]">Page Designer: Test.PageDesignDynamicCol</span>
        <div className="ml-auto flex items-center">
          <div className="w-[45px] flex justify-center"><i className="w-[10px] h-px bg-white" /></div>
          <div className="w-[45px] flex justify-center"><i className="w-[10px] h-[10px] border border-white" /></div>
          <div className="w-[46px] flex justify-center">
            <svg width="10" height="10" viewBox="0 0 10 10"><path d="M0 0l10 10M10 0L0 10" stroke="#fff" /></svg>
          </div>
        </div>
      </div>
      <Menu />
      <Row1 />
      <Row2 />
      <div className="h-[12px] shrink-0 bg-gradient-to-b from-[#f9f9f9] to-[#eeeeee]" />
      <div className="flex-1 min-h-0 flex">
        <Palette />
        <Center />
        <Right />
      </div>
      <div className="absolute left-[242px] top-[606px] w-[100px] h-[38px] border-[4px] border-[#ed1c24] pointer-events-none" />
    </div>
  );
}
